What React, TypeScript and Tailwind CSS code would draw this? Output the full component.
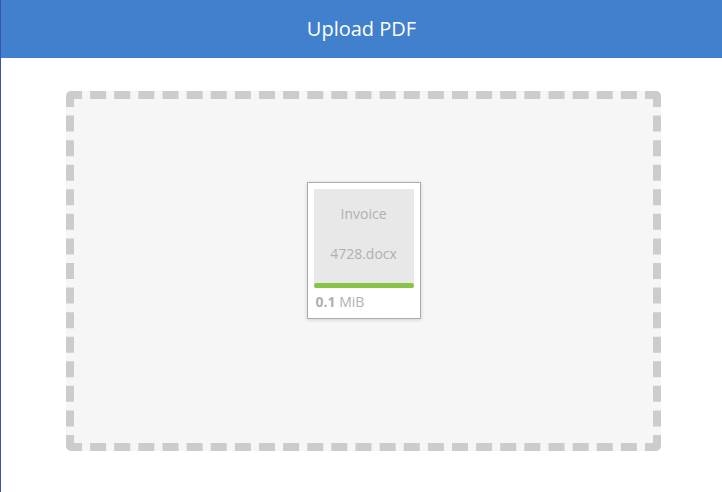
export default function App() {
  return (
    <div
      className="min-h-[492px] border-l border-[#3f51b5] bg-white"
      style={{ fontFamily: '"Open Sans", "Liberation Sans", sans-serif' }}
    >
      {/* Header */}
      <header className="flex h-[58px] items-center justify-center bg-[#4080cc]">
        <h1 className="text-[20px] font-normal text-white">Upload PDF</h1>
      </header>

      {/* Drop zone */}
      <div className="pl-[65px] pr-[61px] pt-[33px]">
        <div className="flex h-[360px] justify-center rounded-[5px] border-8 border-dashed border-[#cccccc] bg-[#f6f6f6] pt-[83px]">
          <div className="h-[137px] w-[114px] border border-[#acacac] bg-white p-[6px] shadow-[0_1px_4px_rgba(0,0,0,0.15)]">
            <div className="flex h-[94px] flex-col items-center bg-[#e8e8e8] pt-[15px] text-[14px] text-[#b0b0b0]">
              <span className="leading-[20px]">Invoice</span>
              <span className="mt-[20px] leading-[20px]">4728.docx</span>
            </div>
            <div className="h-[5px] rounded-[2px] bg-[#8bc34a]" />
            <div className="mt-[5px] px-[2px] text-[14px] leading-[18px] text-[#b0b0b0]">
              <span className="font-bold">0.1</span> MiB
            </div>
          </div>
        </div>
      </div>
    </div>
  );
}
